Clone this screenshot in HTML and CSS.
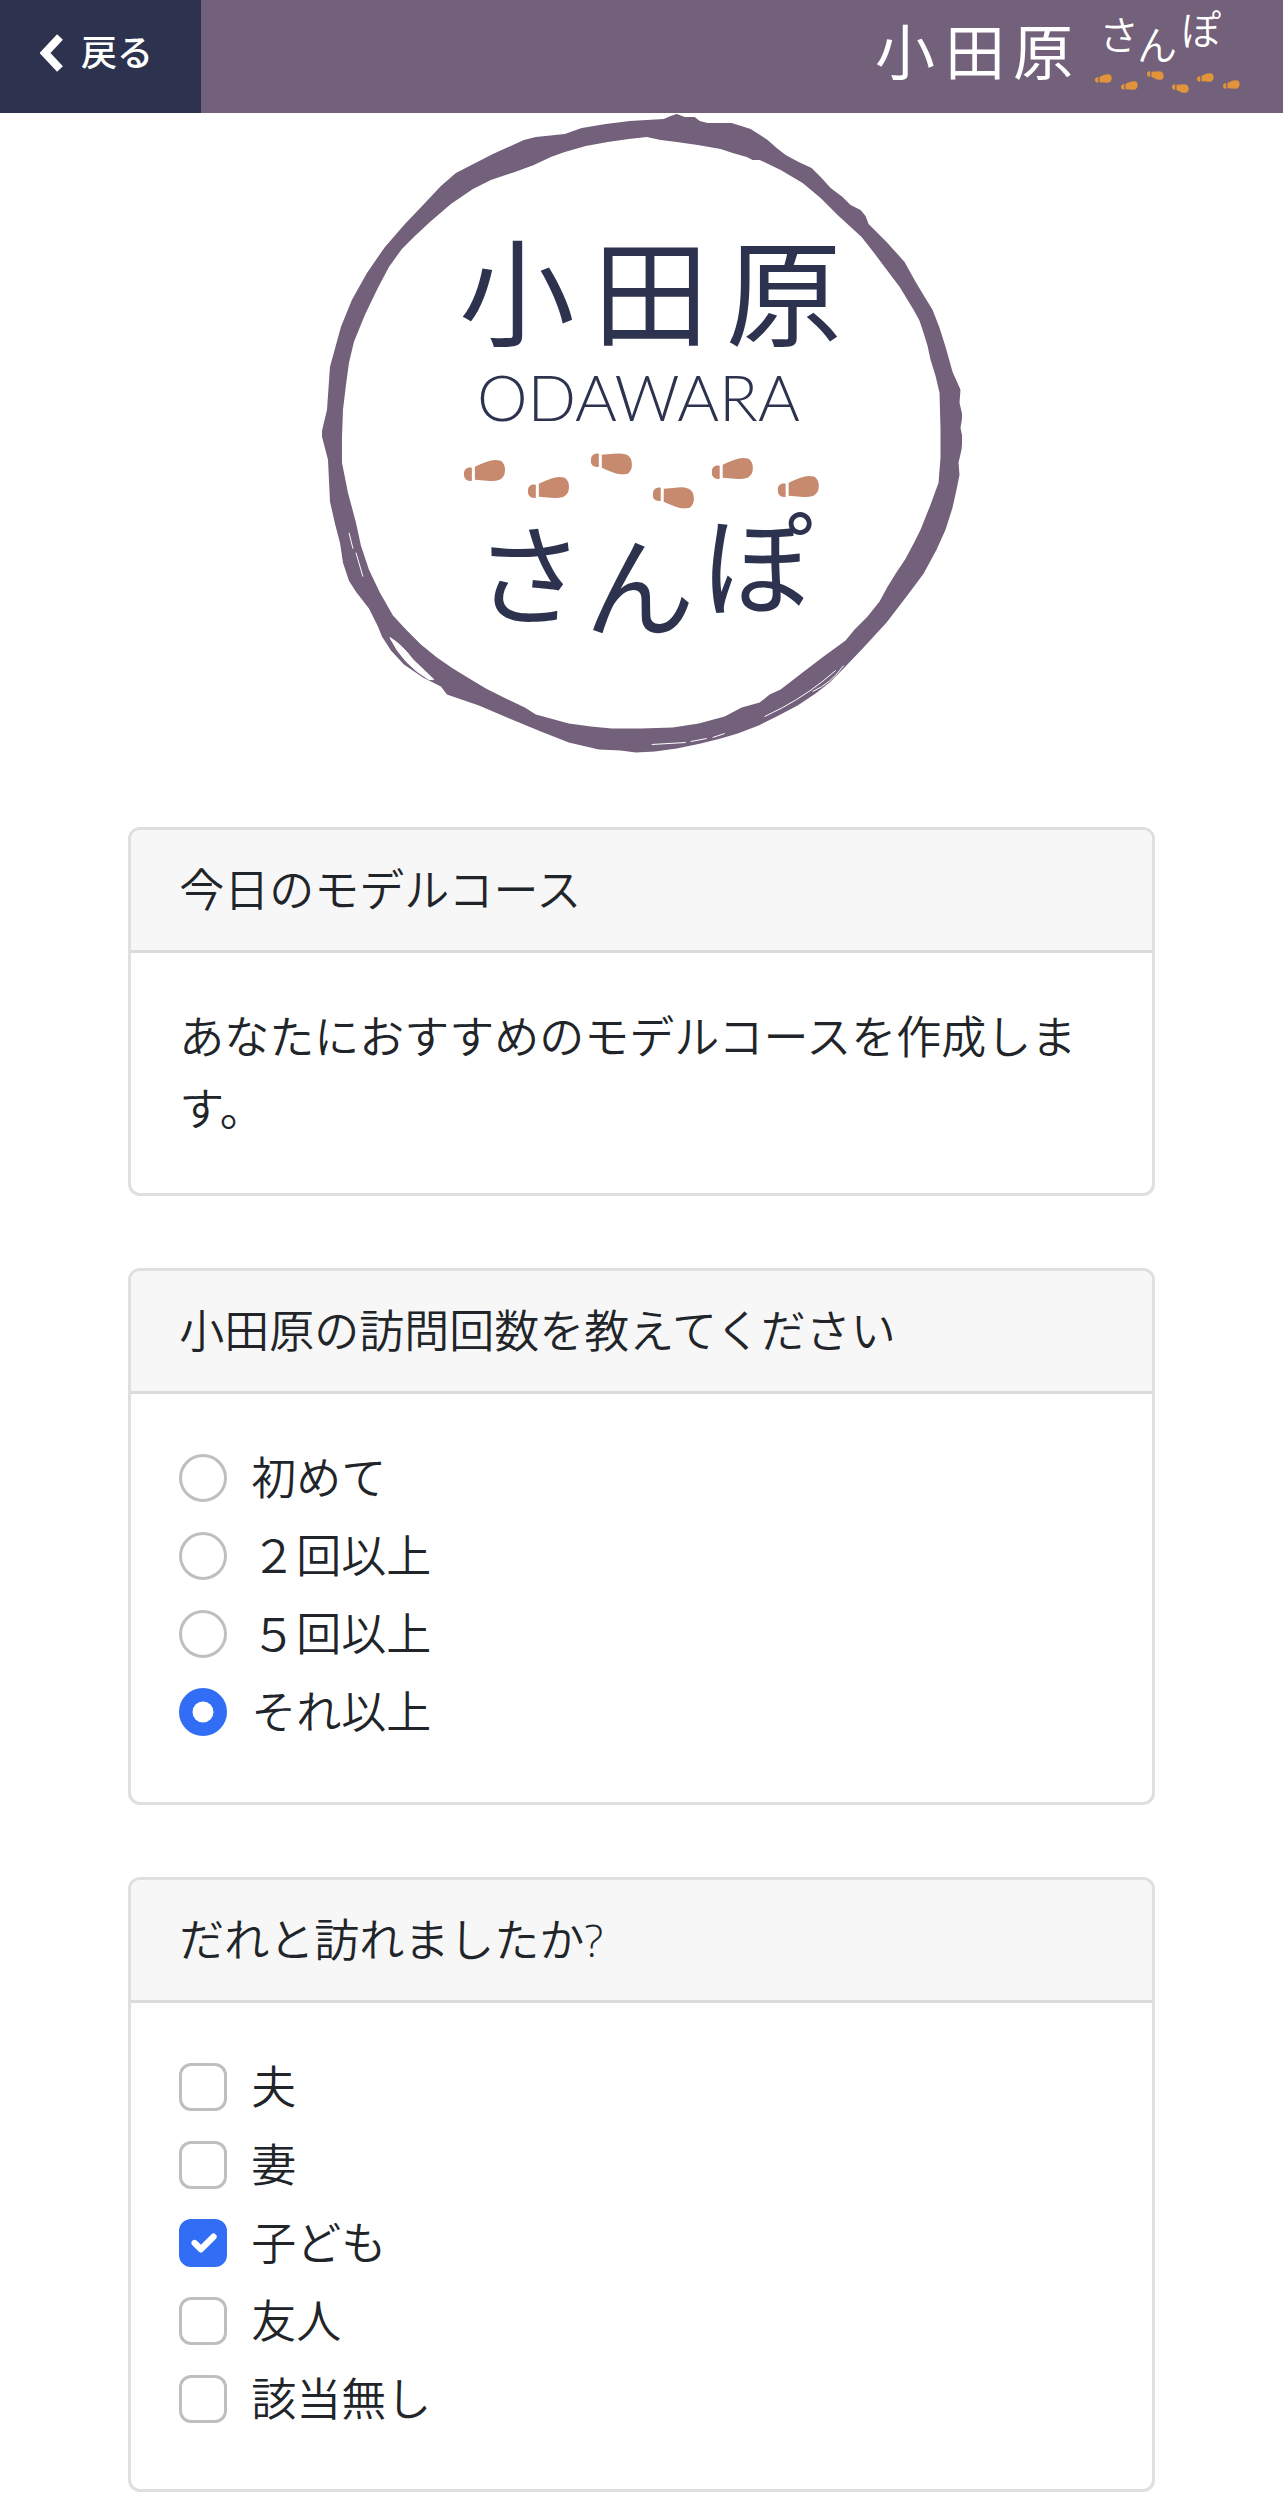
FILE: index.html
```html
<!DOCTYPE html>
<html lang="ja">
<head>
    <meta charset="UTF-8">
    <meta name="viewport" content="width=device-width, initial-scale=1.0">
    <title>小田原さんぽ</title>
    <link rel="stylesheet" href="styles.css">
</head>
<body>
    <!-- 足あと（ヘッダーとロゴで共用） -->
    <svg class="svg-defs" aria-hidden="true">
        <symbol id="foot" viewBox="0 0 42 22">
            <path d="M8 8C3 7 0 10 0 14C0 19 3 22 8 21Z"/>
            <path d="M11 7Q17 4 23 2Q30 -1 37 1Q42 5 41 12Q41 17 36 20Q30 22 23 21L11 20Z"/>
        </symbol>
    </svg>

    <header class="header">
        <a class="back" href="#">
            <svg class="back-icon" viewBox="0 0 24 40" aria-hidden="true">
                <path d="M20 4L5 20L20 36"/>
            </svg>
            戻る
        </a>
        <a class="brand" href="#" aria-label="小田原さんぽ">
            <svg class="brand-logo" viewBox="0 0 420 113">
                <g class="brand-kanji">
                    <text x="12" y="75">小</text>
                    <text x="82" y="75">田</text>
                    <text x="150" y="75">原</text>
                </g>
                <g class="brand-kana">
                    <text x="236" y="50">さ</text>
                    <text x="274" y="60">ん</text>
                    <text x="318" y="45">ぽ</text>
                </g>
                <g class="brand-feet">
                    <use href="#foot" x="232" y="74" width="17" height="9"/>
                    <use href="#foot" x="258" y="81" width="17" height="9"/>
                    <use href="#foot" width="17" height="9" transform="translate(284 80) scale(1 -1)"/>
                    <use href="#foot" width="17" height="9" transform="translate(309 93) scale(1 -1)"/>
                    <use href="#foot" x="334" y="73" width="17" height="9"/>
                    <use href="#foot" x="360" y="80" width="17" height="9"/>
                </g>
            </svg>
        </a>
    </header>

    <main class="main">
        <svg class="logo" viewBox="0 0 642 642" role="img" aria-label="小田原さんぽ ODAWARA">
            <!-- 筆書きの輪 -->
            <path class="logo-ring" fill-rule="evenodd" d="M343 6L350 3L356 1L364 4L374 4L379 8L387 10L411 10L430 16L447 27L456 35L465 42L478 49L491 55L501 65L510 75L522 84L530 92L540 97L545 103L548 111L566 129L584 149L595 169L604 184L612 197L619 215L625 234L632 259L640 277L639 290L642 303L640 315L642 325L641 337L638 350L639 362L636 377L632 395L625 417L616 437L603 461L586 484L566 510L543 535L523 556L509 570L495 581L477 593L456 604L438 613L417 621L400 626L380 631L356 636L334 639L315 640L300 638L278 637L248 630L220 619L191 607L158 593L126 582L120 574L102 565L83 552L70 538L61 524L57 514L48 496L35 479L28 468L22 450L19 430L14 411L9 389L7 347L1 324L1 318L6 297L9 254L20 214L31 187L46 160L64 134L84 111L105 89L120 73L135 60L172 41L203 27L215 24L244 21L261 15L285 11L309 8Z
                M326 24L308 26L287 29L265 33L244 39L230 44L213 52L194 59L170 67L152 76L130 91L109 109L94 123L81 136L68 154L57 175L44 202L33 229L28 250L25 272L22 297L21 325L21 350L27 380L35 410L40 433L48 457L59 480L72 503L85 517L100 532L116 545L132 556L150 567L165 576L185 586L204 595L215 602L248 611L270 614L291 616L320 616L352 615L378 611L404 604L421 595L439 590L449 582L460 577L482 560L503 544L525 528L534 517L547 504L559 489L567 474L575 461L585 446L593 431L600 417L610 392L618 370L620 345L620 317L619 280L615 263L610 247L607 233L603 220L599 208L593 197L579 174L564 154L552 138L541 124L517 102L500 85L482 70L460 57L439 47L432 47L426 44L412 40L400 36L377 32L356 29L340 27Z"/>
            <g class="logo-scratch">
                <path class="fill" d="M69 525Q81 532 92 547L113 567L108 567Q82 552 69 525Z"/>
                <path d="M28 420L32 436M35 440L42 464"/>
                <path d="M523 553Q510 571 492 579"/>
                <path d="M515 558Q490 580 462 595L444 604"/>
                <path d="M331 632L365 630M370 629L386 626M392 625L404 621"/>
            </g>
            <g class="logo-kanji">
                <text x="138" y="224">小</text>
                <text x="272" y="224">田</text>
                <text x="405" y="224">原</text>
            </g>
            <text class="logo-roman" x="156" y="308">ODAWARA</text>
            <g class="logo-feet">
                <use href="#foot" x="143" y="347" width="42" height="22"/>
                <use href="#foot" x="207" y="364" width="42" height="22"/>
                <use href="#foot" width="42" height="22" transform="translate(270 362) scale(1 -1)"/>
                <use href="#foot" width="42" height="22" transform="translate(332 396) scale(1 -1)"/>
                <use href="#foot" x="391" y="345" width="42" height="22"/>
                <use href="#foot" x="457" y="363" width="42" height="22"/>
            </g>
            <g class="logo-kana">
                <text x="153" y="504">さ</text>
                <text x="264" y="516">ん</text>
                <text x="382" y="494">ぽ</text>
            </g>
        </svg>

        <form class="cards">
            <section class="card">
                <h2 class="card-header">今日のモデルコース</h2>
                <div class="card-body">
                    <p>あなたにおすすめのモデルコースを作成します。</p>
                </div>
            </section>

            <section class="card" role="radiogroup" aria-labelledby="visit-title">
                <h2 class="card-header" id="visit-title">小田原の訪問回数を教えてください</h2>
                <div class="card-body">
                    <div class="form-check">
                        <input type="radio" name="visit" id="visit1">
                        <label for="visit1">初めて</label>
                    </div>
                    <div class="form-check">
                        <input type="radio" name="visit" id="visit2">
                        <label for="visit2">２回以上</label>
                    </div>
                    <div class="form-check">
                        <input type="radio" name="visit" id="visit3">
                        <label for="visit3">５回以上</label>
                    </div>
                    <div class="form-check">
                        <input type="radio" name="visit" id="visit4" checked>
                        <label for="visit4">それ以上</label>
                    </div>
                </div>
            </section>

            <section class="card" role="group" aria-labelledby="with-title">
                <h2 class="card-header" id="with-title">だれと訪れましたか?</h2>
                <div class="card-body">
                    <div class="form-check">
                        <input type="checkbox" name="with" id="with1">
                        <label for="with1">夫</label>
                    </div>
                    <div class="form-check">
                        <input type="checkbox" name="with" id="with2">
                        <label for="with2">妻</label>
                    </div>
                    <div class="form-check">
                        <input type="checkbox" name="with" id="with3" checked>
                        <label for="with3">子ども</label>
                    </div>
                    <div class="form-check">
                        <input type="checkbox" name="with" id="with4">
                        <label for="with4">友人</label>
                    </div>
                    <div class="form-check">
                        <input type="checkbox" name="with" id="with5">
                        <label for="with5">該当無し</label>
                    </div>
                </div>
            </section>
        </form>
    </main>
</body>
</html>
```
FILE: styles.css
```css
* {
    margin: 0;
    padding: 0;
    box-sizing: border-box;
}

body {
    font-family: "Open Sans", "Noto Sans CJK JP", sans-serif;
    font-size: 45px;
    font-weight: 350;
    line-height: 72px;
    color: #212529;
    background-color: #fff;
}

.svg-defs {
    display: none;
}

/* ヘッダー */
.header {
    display: flex;
    justify-content: space-between;
    height: 113px;
    background-color: #73607a;
}

.back {
    display: flex;
    align-items: center;
    gap: 17px;
    padding: 0 48px 8px 40px;
    background-color: #2d334f;
    color: #fff;
    font-size: 36px;
    font-weight: 500;
    text-decoration: none;
}

.back-icon {
    width: 24px;
    height: 40px;
    fill: none;
    stroke: #fff;
    stroke-width: 8;
}

.brand-logo {
    display: block;
    height: 113px;
    font-family: "Noto Sans CJK JP", sans-serif;
    fill: #fff;
}

.brand-kanji {
    font-size: 60px;
    font-weight: 400;
}

.brand-kana {
    font-size: 40px;
    font-weight: 350;
}

.brand-feet {
    fill: #e2943b;
}

/* ロゴ */
.main {
    padding-bottom: 21px;
}

.logo {
    display: block;
    width: 50%;
    margin: 0 auto 72px;
    font-family: "Noto Sans CJK JP", sans-serif;
    fill: #2d334f;
}

.logo-ring {
    fill: #73607a;
}

.logo-scratch {
    fill: none;
    stroke: #fff;
    stroke-width: 1;
}

.logo-scratch .fill {
    fill: #fff;
}

.logo-kanji {
    font-size: 116px;
    font-weight: 400;
}

.logo-roman {
    font-family: Lato, sans-serif;
    font-size: 64px;
    font-weight: 300;
}

.logo-feet {
    fill: #c78a6f;
}

.logo-kana {
    font-size: 110px;
    font-weight: 400;
}

/* カード */
.cards {
    display: flex;
    flex-direction: column;
    gap: 72px;
    width: 80%;
    margin: 0 auto;
}

.card {
    border: 3px solid #dfdfdf;
    border-radius: 12px;
    overflow: hidden;
}

.card-header {
    padding: 24px 48px;
    border-bottom: 3px solid #dbdbdb;
    background-color: #f7f7f7;
    font-size: 45px;
    font-weight: 350;
}

.card-body {
    padding: 48px;
}

/* 選択肢 */
.form-check {
    display: flex;
    gap: 24px;
    margin-bottom: 6px;
}

.form-check input {
    appearance: none;
    flex-shrink: 0;
    width: 48px;
    height: 48px;
    margin-top: 12px;
    border: 3px solid #bfbfbf;
    background: #fff center / contain no-repeat;
}

.form-check input[type="radio"] {
    border-radius: 50%;
}

.form-check input[type="checkbox"] {
    border-radius: 12px;
}

.form-check input:checked {
    border-color: #316df5;
    background-color: #316df5;
}

.form-check input[type="radio"]:checked {
    background-image: url("data:image/svg+xml,%3csvg xmlns='http://www.w3.org/2000/svg' viewBox='-4 -4 8 8'%3e%3ccircle r='2' fill='%23fff'/%3e%3c/svg%3e");
}

.form-check input[type="checkbox"]:checked {
    background-image: url("data:image/svg+xml,%3csvg xmlns='http://www.w3.org/2000/svg' viewBox='0 0 20 20'%3e%3cpath fill='none' stroke='%23fff' stroke-linecap='round' stroke-linejoin='round' stroke-width='3' d='M6 10l3 3l6-6'/%3e%3c/svg%3e");
}
```
